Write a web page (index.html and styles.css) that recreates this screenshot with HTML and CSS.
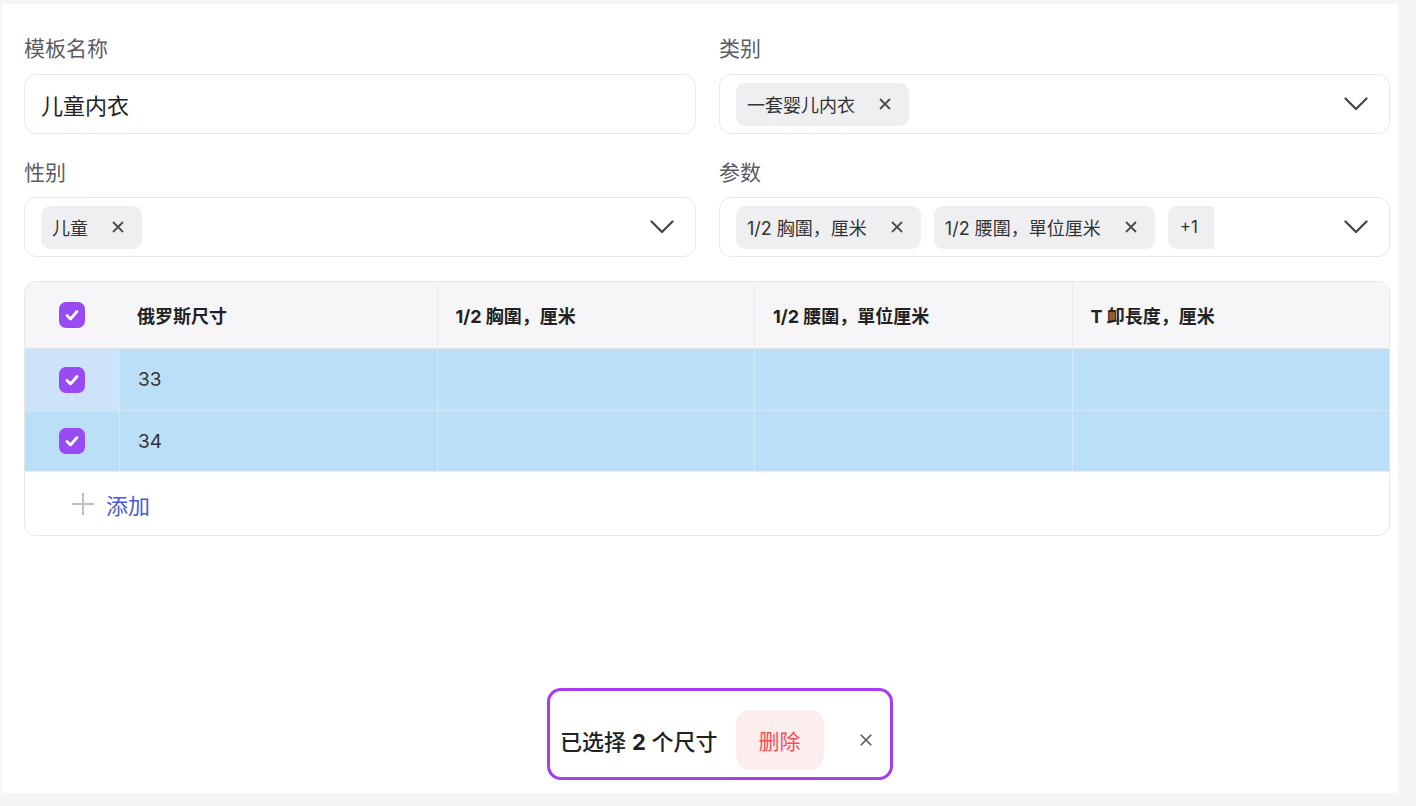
FILE: index.html
```html
<!DOCTYPE html>
<html lang="zh">
<head>
<meta charset="utf-8">
<title>模板</title>
<link rel="stylesheet" href="styles.css">
</head>
<body>
<div class="page">
  <div class="form">
    <div class="field">
      <div class="label">模板名称</div>
      <div class="input"><span class="value">儿童内衣</span></div>
    </div>
    <div class="field">
      <div class="label">类别</div>
      <div class="input select">
        <div class="tags">
          <span class="tag">一套婴儿内衣<svg class="x" viewBox="0 0 16 16"><path d="M3 3l10 10M13 3L3 13"/></svg></span>
        </div>
        <svg class="chev" viewBox="0 0 24 14"><path d="M1.5 1.5l10.5 10.5 10.5-10.5"/></svg>
      </div>
    </div>
    <div class="field">
      <div class="label">性别</div>
      <div class="input select">
        <div class="tags">
          <span class="tag">儿童<svg class="x" viewBox="0 0 16 16"><path d="M3 3l10 10M13 3L3 13"/></svg></span>
        </div>
        <svg class="chev" viewBox="0 0 24 14"><path d="M1.5 1.5l10.5 10.5 10.5-10.5"/></svg>
      </div>
    </div>
    <div class="field">
      <div class="label">参数</div>
      <div class="input select">
        <div class="tags">
          <span class="tag">1/2 胸圍，厘米<svg class="x" viewBox="0 0 16 16"><path d="M3 3l10 10M13 3L3 13"/></svg></span>
          <span class="tag">1/2 腰圍，單位厘米<svg class="x" viewBox="0 0 16 16"><path d="M3 3l10 10M13 3L3 13"/></svg></span>
          <span class="tag more">+1</span>
        </div>
        <svg class="chev" viewBox="0 0 24 14"><path d="M1.5 1.5l10.5 10.5 10.5-10.5"/></svg>
      </div>
    </div>
  </div>

  <div class="table">
    <div class="row head">
      <div class="cell chk"><span class="cb"><svg viewBox="0 0 26 26"><path d="M8 13.5l3.5 3.5 6.5-7.5"/></svg></span></div>
      <div class="cell">俄罗斯尺寸</div>
      <div class="cell">1/2 胸圍，厘米</div>
      <div class="cell">1/2 腰圍，單位厘米</div>
      <div class="cell">T 卹長度，厘米</div>
    </div>
    <div class="row sel">
      <div class="cell chk hover"><span class="cb"><svg viewBox="0 0 26 26"><path d="M8 13.5l3.5 3.5 6.5-7.5"/></svg></span></div>
      <div class="cell">33</div>
      <div class="cell"></div>
      <div class="cell"></div>
      <div class="cell"></div>
    </div>
    <div class="row sel">
      <div class="cell chk"><span class="cb"><svg viewBox="0 0 26 26"><path d="M8 13.5l3.5 3.5 6.5-7.5"/></svg></span></div>
      <div class="cell">34</div>
      <div class="cell"></div>
      <div class="cell"></div>
      <div class="cell"></div>
    </div>
    <div class="add">
      <svg class="plus" viewBox="0 0 24 24"><path d="M12 1v22M1 12h22"/></svg>
      <span>添加</span>
    </div>
  </div>

  <div class="actionbar">
    <span class="count">已选择 <b>2</b> 个尺寸</span>
    <button class="del">删除</button>
    <svg class="close" viewBox="0 0 16 16"><path d="M2 2l12 12M14 2L2 14"/></svg>
  </div>
</div>
</body>
</html>
```

FILE: styles.css
```css
html, body {
  margin: 0;
  padding: 0;
  height: 806px;
  overflow: hidden;
  background: #f5f5f7;
  font-family: "Inter", "Noto Sans CJK SC", sans-serif;
  color: #222;
}

.page {
  position: relative;
  margin: 4px 18px 0 2px;
  height: 789px;
  box-sizing: border-box;
  background: #fff;
  padding: 32px 8px 0 22px;
}

.form {
  display: grid;
  grid-template-columns: 672px 671px;
  column-gap: 23px;
  row-gap: 26px;
}

.label {
  font-size: 21px;
  line-height: 26px;
  color: #5c5c62;
  margin-bottom: 12px;
}

.field:nth-child(n+3) .label {
  margin-bottom: 11px;
}

.input {
  height: 60px;
  box-sizing: border-box;
  border: 1px solid #e8e8ec;
  border-radius: 12px;
  display: flex;
  align-items: center;
  padding: 0 21px 0 16px;
}

.value {
  font-size: 22px;
  color: #222;
}

.select {
  justify-content: space-between;
  padding-right: 21px;
}

.tags {
  display: flex;
  gap: 13px;
  align-items: center;
}

.tag {
  display: inline-flex;
  align-items: center;
  height: 43px;
  padding: 0 16px 0 11px;
  background: #efeff2;
  border-radius: 9px;
  font-size: 18px;
  color: #333;
  gap: 22px;
}

.tag .x {
  width: 16px;
  height: 16px;
  fill: none;
  stroke: #4a4a4f;
  stroke-width: 1.8;
}

.tag.more {
  padding: 0 12px;
  border-radius: 9px 0 0 9px;
  font-size: 17px;
  width: 46px;
  box-sizing: border-box;
}

.chev {
  width: 24px;
  height: 14px;
  fill: none;
  stroke: #444;
  stroke-width: 2.2;
  stroke-linecap: round;
  stroke-linejoin: round;
}

.table {
  margin-top: 24px;
  border: 1px solid #e6e6ea;
  border-radius: 12px;
  overflow: hidden;
}

.row {
  display: grid;
  grid-template-columns: 94px repeat(4, 1fr);
}

.head {
  height: 66px;
  background: #f6f6f8;
  border-bottom: 1px solid #e4e4e8;
  font-weight: 700;
  font-size: 18px;
  color: #222;
}

.cell {
  display: flex;
  align-items: center;
  padding-left: 18px;
}

.head .cell + .cell + .cell {
  border-left: 1px solid #ebebef;
}

.sel {
  height: 61px;
  background: #bcdff8;
  font-size: 19px;
  color: #333;
}

.sel + .sel {
  border-top: 1px solid #d3e8f9;
  height: 60px;
}

.sel .cell + .cell {
  border-left: 1px solid #d3e8f9;
}

.cell.chk {
  justify-content: center;
  padding-left: 0;
}

.cell.hover {
  background: #cde3fa;
}

.cb {
  width: 26px;
  height: 26px;
  border-radius: 7px;
  background: #9a4af4;
  display: inline-flex;
}

.cb svg {
  width: 26px;
  height: 26px;
  fill: none;
  stroke: #fff;
  stroke-width: 2.8;
  stroke-linecap: round;
  stroke-linejoin: round;
}

.add {
  height: 63px;
  display: flex;
  align-items: center;
  padding-left: 46px;
  gap: 11px;
  font-size: 22px;
  color: #4a5ad6;
  border-top: 1px solid #e6eef6;
}

.plus {
  width: 24px;
  height: 24px;
  fill: none;
  stroke: #bdbdc2;
  stroke-width: 2;
}

.actionbar {
  position: absolute;
  left: 545px;
  top: 684px;
  width: 346px;
  height: 92px;
  box-sizing: border-box;
  border: 3px solid #a73cf0;
  border-radius: 14px;
  background: #fff;
  display: flex;
  align-items: center;
  padding: 12px 0 0 10px;
}

.count {
  font-size: 22px;
  color: #222;
  font-weight: 500;
  white-space: nowrap;
}

.count b {
  font-weight: 700;
}

.del {
  margin-left: 18px;
  width: 88px;
  height: 60px;
  flex: none;
  border: none;
  border-radius: 14px;
  background: #fdeeee;
  color: #f14f57;
  font-family: "Inter", "Noto Sans CJK SC", sans-serif;
  font-size: 21px;
  padding: 0;
}

.close {
  margin-left: 35px;
  width: 14px;
  height: 14px;
  flex: none;
  fill: none;
  stroke: #555;
  stroke-width: 1.8;
}
```
